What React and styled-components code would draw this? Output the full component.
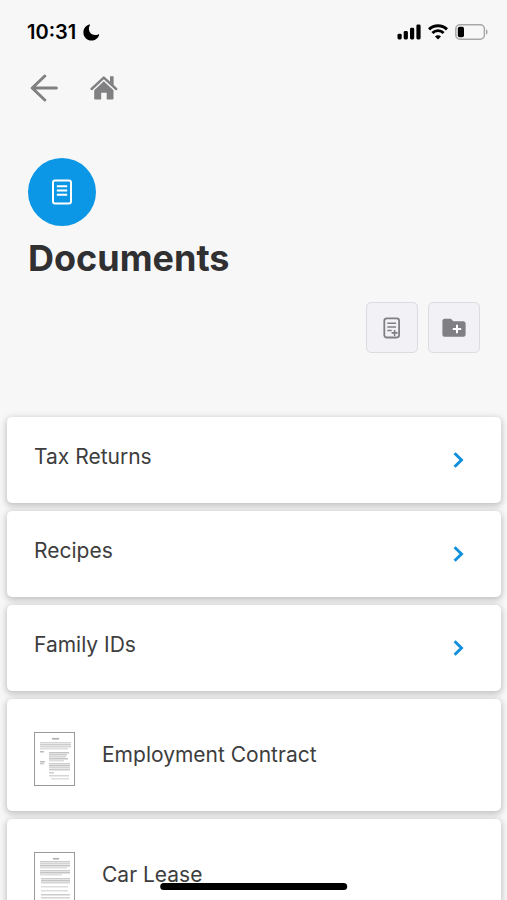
import styled, { createGlobalStyle } from "styled-components";

const GlobalStyle = createGlobalStyle`
  * {
    box-sizing: border-box;
  }
  body {
    margin: 0;
    background-color: #f7f7f7;
    color: #3d3d3d;
    font-family: Inter, "Liberation Sans", sans-serif;
  }
`;

const Screen = styled.div`
  display: flex;
  flex-direction: column;
  height: 100vh;
`;

const Content = styled.main`
  flex: 1;
  min-height: 0;
  padding-bottom: 40px;
  overflow-y: auto;
  scrollbar-width: none;
`;

const StatusBar = styled.div`
  display: flex;
  align-items: center;
  justify-content: space-between;
  height: 64px;
  padding: 0 19px 0 27px;
  color: #000;
`;

const StatusGroup = styled.div`
  display: flex;
  align-items: center;
  gap: 7px;
`;

const Time = styled.span`
  font-size: 20px;
  line-height: 24px;
  font-weight: 600;
`;

const Nav = styled.nav`
  display: flex;
  align-items: center;
  gap: 32px;
  height: 48px;
  padding: 0 30px;
`;

const NavButton = styled.button`
  display: flex;
  padding: 0;
  border: none;
  background: none;
  color: #808082;
  cursor: pointer;
`;

const Header = styled.header`
  padding: 46px 28px 0;
`;

const Badge = styled.div`
  display: flex;
  align-items: center;
  justify-content: center;
  width: 68px;
  height: 68px;
  border-radius: 50%;
  background-color: #0b97e5;
  color: white;
`;

const Title = styled.h1`
  margin: 10px 0 0;
  color: #303032;
  font-size: 36px;
  line-height: 44px;
  font-weight: 700;
`;

const Toolbar = styled.div`
  display: flex;
  justify-content: flex-end;
  gap: 10px;
  padding: 22px 27px 0;
`;

const ToolButton = styled.button`
  display: flex;
  align-items: center;
  justify-content: center;
  width: 52px;
  height: 51px;
  padding: 0;
  border: 1px solid #dcdce0;
  border-radius: 5px;
  background-color: #f2f2f6;
  color: #7f7f84;
  cursor: pointer;
`;

const List = styled.ul`
  display: flex;
  flex-direction: column;
  gap: 8px;
  margin: 64px 0 0;
  padding: 0 6px 0 7px;
  list-style: none;
`;

const Card = styled.li`
  border-radius: 5px;
  background-color: white;
  box-shadow: 0 2px 6px 1px rgba(0, 0, 0, 0.22);
`;

const Row = styled.a`
  display: flex;
  align-items: center;
  gap: 27px;
  height: ${(props) => (props.$tall ? 112 : 86)}px;
  padding: ${(props) => (props.$tall ? "0 27px" : "0 37px 0 27px")};
  color: inherit;
  text-decoration: none;
`;

const Label = styled.span`
  flex: 1;
  padding-bottom: ${(props) => (props.$raised ? 6 : 0)}px;
  font-size: 21px;
  line-height: 26px;
`;

const Thumb = styled.svg`
  flex: none;
  margin-top: 8px;
`;

const HomeIndicator = styled.div`
  position: fixed;
  bottom: 10px;
  left: 50%;
  width: 37%;
  height: 7px;
  border-radius: 4px;
  background-color: #000;
  transform: translateX(-50%);
`;

const folders = ["Tax Returns", "Recipes", "Family IDs"];

// each line of a page preview is [x, y, width, shade]
const files = [
  {
    name: "Employment Contract",
    lines: [
      [18, 6, 7, "#aaa"],
      [6, 10, 31, "#d4d4d4"],
      [6, 12, 31, "#ccc"],
      [6, 14, 31, "#d4d4d4"],
      [6, 16, 28, "#ddd"],
      [6, 19, 4, "#bbb"],
      [15, 20, 20, "#c4c4c4"],
      [15, 22, 18, "#ccc"],
      [15, 24, 17, "#d4d4d4"],
      [15, 26, 19, "#c4c4c4"],
      [15, 28, 15, "#ddd"],
      [6, 29, 5, "#bbb"],
      [6, 31, 4, "#ccc"],
      [15, 31, 21, "#ccc"],
      [15, 33, 21, "#c4c4c4"],
      [15, 35, 21, "#d4d4d4"],
      [15, 37, 21, "#ccc"],
      [15, 40, 5, "#ccc"],
      [15, 43, 20, "#d4d4d4"],
      [17, 46, 18, "#ddd"],
    ],
  },
  {
    name: "Car Lease",
    lines: [
      [19, 6, 6, "#aaa"],
      [6, 9, 30, "#ccc"],
      [6, 11, 30, "#d4d4d4"],
      [6, 13, 30, "#c4c4c4"],
      [6, 15, 27, "#ddd"],
      [6, 18, 30, "#ccc"],
      [6, 20, 30, "#c4c4c4"],
      [6, 22, 22, "#ddd"],
      [7, 26, 29, "#ccc"],
      [7, 28, 29, "#c4c4c4"],
      [7, 30, 29, "#d4d4d4"],
      [7, 34, 27, "#ddd"],
      [7, 38, 27, "#ddd"],
      [7, 42, 29, "#ccc"],
      [7, 45, 29, "#d4d4d4"],
    ],
  },
];

const MoonIcon = () => (
  <svg width="17" height="17" viewBox="0 0 17 17" fill="currentColor" aria-hidden="true">
    <path d="M6.2.6C2.700 1.700.4 4.800.4 8.400c0 4.500 3.600 8.100 8.100 8.100 3.500 0 6.500-2.200 7.600-5.300.2-.6-.3-1-.9-.8-1 .4-2 .6-3.100.6-3.600 0-6.200-2.600-6.200-6.200 0-1.200.3-2.300.9-3.200.4-.6.100-1.200-.6-1z" />
  </svg>
);

const SignalIcon = () => (
  <svg width="24" height="16" viewBox="0 0 24 16" fill="currentColor" aria-hidden="true">
    <rect x="0.500" y="9.800" width="4.200" height="5.700" rx="1.400" />
    <rect x="6.700" y="7" width="4.200" height="8.500" rx="1.400" />
    <rect x="13" y="3.800" width="4.200" height="11.700" rx="1.400" />
    <rect x="19.400" y="0.500" width="4.200" height="15" rx="1.400" />
  </svg>
);

const WifiIcon = () => (
  <svg width="20" height="16" viewBox="0 0 20 16" fill="none" stroke="currentColor" aria-hidden="true">
    <path d="M1 5.400a12.900 12.900 0 0 1 18 0" strokeWidth="3" />
    <path d="M4.400 9a8 8 0 0 1 11.200 0" strokeWidth="2.800" />
    <path d="M10 15.600l-3-3.200a4.200 4.200 0 0 1 6 0z" fill="currentColor" stroke="none" />
  </svg>
);

const BatteryIcon = () => (
  <svg width="33" height="16" viewBox="0 0 33 16" fill="none" aria-hidden="true">
    <rect x="0.800" y="0.800" width="28.600" height="14.400" rx="4.200" stroke="#a8a8a8" strokeWidth="1.500" />
    <path d="M31 5.300c1 .4 1.600 1.500 1.600 2.700s-.6 2.300-1.600 2.700z" fill="#a8a8a8" />
    <rect x="2.800" y="2.800" width="6.200" height="10.400" rx="1.800" fill="currentColor" />
  </svg>
);

const BackIcon = () => (
  <svg
    width="28"
    height="28"
    viewBox="0 0 28 28"
    fill="none"
    stroke="currentColor"
    strokeWidth="3"
    strokeLinecap="round"
    strokeLinejoin="round"
    aria-hidden="true"
  >
    <path d="M14.800 2L2.200 14l12.600 12M2.200 14h24.200" />
  </svg>
);

const HomeIcon = () => (
  <svg width="28" height="26" viewBox="0 0 28 26" fill="currentColor" aria-hidden="true">
    <path
      d="M1.600 14L13.800 2.600 26.200 14"
      fill="none"
      stroke="currentColor"
      strokeWidth="2.400"
      strokeLinecap="round"
      strokeLinejoin="round"
    />
    <path d="M20 1.200h3.600v9.200L20 7z" />
    <path d="M13.800 6.300l9.700 9v8.100c0 .7-.5 1.200-1.200 1.200h-5.600v-6.900h-5.500v6.900H5.400c-.7 0-1.200-.5-1.200-1.200v-8.100z" />
  </svg>
);

const DocumentIcon = () => (
  <svg width="20" height="26" viewBox="0 0 20 26" fill="none" stroke="currentColor" aria-hidden="true">
    <rect x="1" y="1.500" width="18" height="23" rx="2" strokeWidth="2" />
    <path d="M4.800 7.300h10.400M4.800 11.500h10.400M4.800 15.700h10.400" strokeWidth="2" />
  </svg>
);

const AddDocumentIcon = () => (
  <svg
    width="18"
    height="22"
    viewBox="0 0 18 22"
    fill="none"
    stroke="currentColor"
    strokeWidth="1.800"
    aria-hidden="true"
  >
    <rect x="1.300" y="1.300" width="14.800" height="19.200" rx="2.400" />
    <path d="M4.300 6.300h8.800M4.300 9.900h8.800M4.300 13.500h4.400" strokeWidth="1.500" />
    <path d="M11.600 12.900v6M8.600 15.900h6" strokeWidth="1.600" />
  </svg>
);

const AddFolderIcon = () => (
  <svg width="24" height="20" viewBox="0 0 24 20" aria-hidden="true">
    <path
      d="M2.600.8h6.300l2.500 2.400h9.900c1.300 0 2.300 1 2.300 2.300v11c0 1.300-1 2.300-2.300 2.300H2.600C1.300 18.800.4 17.800.4 16.500V3.100C.4 1.800 1.300.8 2.600.8z"
      fill="currentColor"
    />
    <path d="M15 6.800v8.400M10.800 11h8.400" stroke="#fff" strokeWidth="2" />
  </svg>
);

const ChevronIcon = () => (
  <svg width="11" height="16" viewBox="0 0 11 16" fill="none" stroke="#0f8fdb" strokeWidth="2.900" aria-hidden="true">
    <path d="M1.600 1.200L8.500 8l-6.900 6.800" />
  </svg>
);

const PagePreview = ({ lines }) => (
  <Thumb width="41" height="54" viewBox="0 0 41 54" aria-hidden="true">
    <rect x="0.500" y="0.500" width="40" height="53" fill="#fff" stroke="#999" />
    {lines.map(([x, y, width, shade]) => (
      <rect key={`${x}-${y}`} x={x} y={y} width={width} height="1.500" fill={shade} />
    ))}
  </Thumb>
);

const App = () => {
  return (
    <>
      <GlobalStyle />
      <Screen>
        <StatusBar>
          <StatusGroup>
            <Time>10:31</Time>
            <MoonIcon />
          </StatusGroup>
          <StatusGroup>
            <SignalIcon />
            <WifiIcon />
            <BatteryIcon />
          </StatusGroup>
        </StatusBar>
        <Nav>
          <NavButton aria-label="Back">
            <BackIcon />
          </NavButton>
          <NavButton aria-label="Home">
            <HomeIcon />
          </NavButton>
        </Nav>
        <Content>
          <Header>
            <Badge>
              <DocumentIcon />
            </Badge>
            <Title>Documents</Title>
          </Header>
          <Toolbar>
            <ToolButton aria-label="Add document">
              <AddDocumentIcon />
            </ToolButton>
            <ToolButton aria-label="Add folder">
              <AddFolderIcon />
            </ToolButton>
          </Toolbar>
          <List>
            {folders.map((name) => (
              <Card key={name}>
                <Row href="#">
                  <Label $raised>{name}</Label>
                  <ChevronIcon />
                </Row>
              </Card>
            ))}
            {files.map((file) => (
              <Card key={file.name}>
                <Row href="#" $tall>
                  <PagePreview lines={file.lines} />
                  <Label>{file.name}</Label>
                </Row>
              </Card>
            ))}
          </List>
        </Content>
      </Screen>
      <HomeIndicator />
    </>
  );
};

export default App;
